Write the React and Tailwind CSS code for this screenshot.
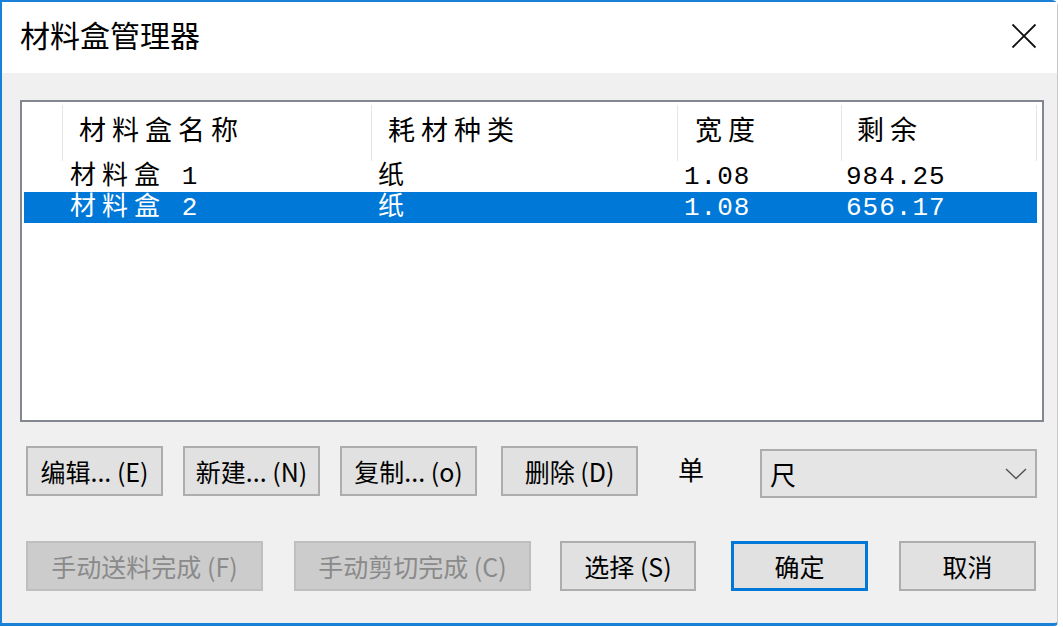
const FONT = { fontFamily: '"Noto Sans CJK SC", "Noto Sans", sans-serif' }
const LIST_FONT = { fontFamily: '"Liberation Mono", "Noto Sans CJK SC", monospace' }

const ROWS = [
  { name: '材料盒', num: '1', type: '纸', width: '1.08', left: '984.25' },
  { name: '材料盒', num: '2', type: '纸', width: '1.08', left: '656.17', selected: true },
]

function Button({ children, width, disabled, primary, className = '' }) {
  let look = 'border-2 border-[#adadad] bg-[#e1e1e1] text-black'
  if (disabled) look = 'border-2 border-[#bfbfbf] bg-[#cccccc] text-[#8a8a8a]'
  if (primary) look = 'border-[3px] border-[#0078d7] bg-[#e1e1e1] text-black'
  return (
    <div className={`h-[50px] flex items-center justify-center text-[25px] leading-none shrink-0 ${look} ${width} ${className}`}>
      {children}
    </div>
  )
}

export default function App() {
  return (
    <div className="w-[1063px] h-[627px] bg-white overflow-hidden" style={FONT}>
      <div className="w-[1058px] h-[626px] flex flex-col border-l-2 border-t-2 border-b-[3px] border-[#1a80d8] border-r border-r-[#c8c8c8] rounded-tr-[6px] rounded-br-[4px] bg-[#f0f0f0]">
        {/* title bar */}
        <div className="h-[71px] bg-white flex items-center justify-between pl-[18px] pr-[20px] shrink-0">
          <span className="text-[30px] text-black leading-none -mt-[7px]">材料盒管理器</span>
          <svg width="26" height="26" viewBox="0 0 26 26" className="-mt-[3px]">
            <path d="M1.5 1.5 L24.5 24.5 M24.5 1.5 L1.5 24.5" stroke="#111" strokeWidth="1.8" fill="none" />
          </svg>
        </div>

        <div className="flex flex-col pl-[18px]">
          {/* list box */}
          <div className="mt-[27px] w-[1024px] h-[322px] border-2 border-[#828790] bg-white" style={LIST_FONT}>
            <div className="flex h-[59px] pt-[3px]">
              <div className="w-[40px]" />
              <div className="w-[309px] border-l border-[#e5e5e5] pl-[16px] flex items-center text-[27px] tracking-[6px] text-black">材料盒名称</div>
              <div className="w-[306px] border-l border-[#e5e5e5] pl-[16px] flex items-center text-[27px] tracking-[6px] text-black">耗材种类</div>
              <div className="w-[164px] border-l border-[#e5e5e5] pl-[17px] flex items-center text-[27px] tracking-[6px] text-black">宽度</div>
              <div className="w-[196px] border-l border-r border-[#e5e5e5] pl-[15px] flex items-center text-[27px] tracking-[6px] text-black">剩余</div>
            </div>
            {ROWS.map(r => (
              <div
                key={r.num}
                className={`flex h-[31px] items-center ml-[2px] w-[1013px] text-[26px] leading-none ${r.selected ? 'bg-[#0078d7] text-white' : 'text-black'}`}
              >
                <div className="w-[46px]" />
                <div className="w-[308px] whitespace-pre">
                  <span className="tracking-[6px]">{r.name}</span>
                  <span> {r.num}</span>
                </div>
                <div className="w-[306px]">{r.type}</div>
                <div className="w-[162px] tracking-[1px]">{r.width}</div>
                <div className="tracking-[1px]">{r.left}</div>
              </div>
            ))}
          </div>

          {/* first button row */}
          <div className="flex items-start mt-[24px]">
            <Button width="w-[137px]" className="ml-[6px]">编辑... (E)</Button>
            <Button width="w-[137px]" className="ml-[20px]">新建... (N)</Button>
            <Button width="w-[137px]" className="ml-[20px]">复制... (o)</Button>
            <Button width="w-[137px]" className="ml-[24px]">删除 (D)</Button>
            <span className="ml-[40px] mt-[10px] text-[26px] text-black leading-none">单</span>
            <div className="ml-[56px] mt-[3px] w-[277px] h-[49px] border-2 border-[#adadad] bg-[#e5e5e5] flex items-center justify-between pl-[8px] pr-[8px]">
              <span className="text-[26px] text-black leading-none">尺</span>
              <svg width="22" height="12" viewBox="0 0 22 12">
                <path d="M1 1 L11 10.5 L21 1" stroke="#555" strokeWidth="1.5" fill="none" />
              </svg>
            </div>
          </div>

          {/* second button row */}
          <div className="flex items-start mt-[43px]">
            <Button width="w-[237px]" className="ml-[6px]" disabled>手动送料完成 (F)</Button>
            <Button width="w-[237px]" className="ml-[31px]" disabled>手动剪切完成 (C)</Button>
            <Button width="w-[136px]" className="ml-[29px]">选择 (S)</Button>
            <Button width="w-[137px]" className="ml-[35px]" primary>确定</Button>
            <Button width="w-[137px]" className="ml-[31px]">取消</Button>
          </div>
        </div>
      </div>
    </div>
  )
}
